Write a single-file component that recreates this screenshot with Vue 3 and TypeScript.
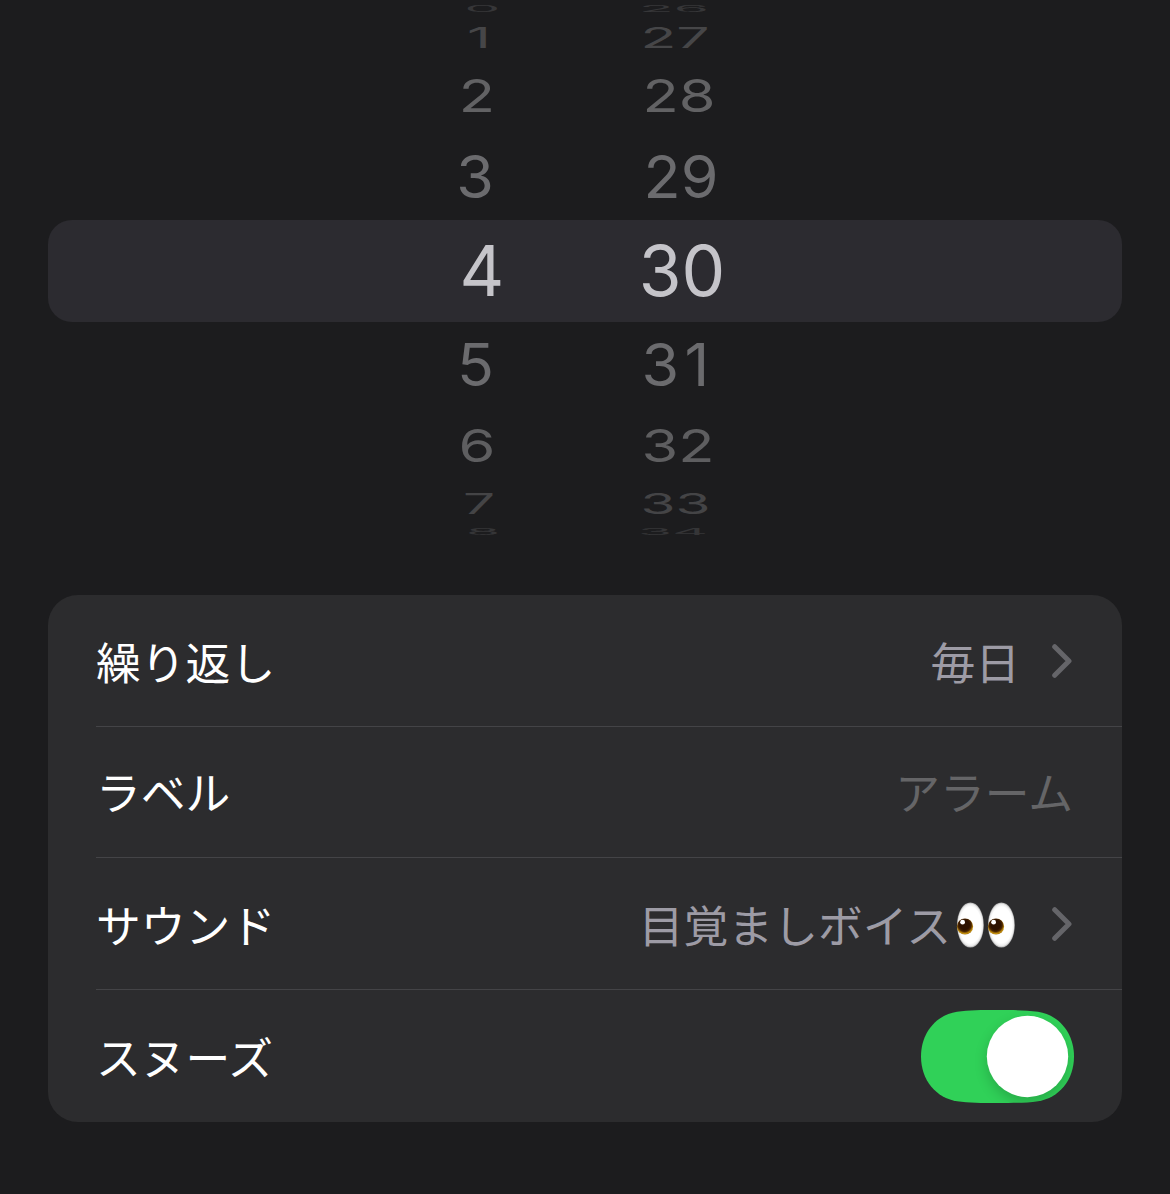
<script lang="ts" setup>
interface WheelRow {
  hour: number
  minute: number
  height: number
  scaleX: number
  scaleY: number
  hourShift: number
  minuteShift: number
  color: string
  loose?: boolean
}

interface Setting {
  label: string
  value?: string
  kind: 'link' | 'placeholder' | 'toggle'
  eyes?: boolean
}

// Rows get flatter and darker the further they are from the selected one
const wheel: WheelRow[] = [
  { hour: 0, minute: 26, height: 16, scaleX: 0.81, scaleY: 0.13, hourShift: 2.5, minuteShift: -6, color: '#363638' },
  { hour: 1, minute: 27, height: 41, scaleX: 0.84, scaleY: 0.41, hourShift: -1, minuteShift: -5, color: '#464648' },
  { hour: 2, minute: 28, height: 75, scaleX: 0.85, scaleY: 0.65, hourShift: -3, minuteShift: -1, color: '#626264' },
  { hour: 3, minute: 29, height: 87, scaleX: 0.87, scaleY: 0.84, hourShift: -5, minuteShift: 1, color: '#6b6b6e' },
  { hour: 4, minute: 30, height: 102, scaleX: 0.99, scaleY: 1, hourShift: 2, minuteShift: 2, color: '#c5c4c9' },
  { hour: 5, minute: 31, height: 86, scaleX: 0.87, scaleY: 0.84, hourShift: -4.5, minuteShift: -2, color: '#6b6b6e', loose: true },
  { hour: 6, minute: 32, height: 75, scaleX: 0.85, scaleY: 0.65, hourShift: -3, minuteShift: -2, color: '#5e5e60' },
  { hour: 7, minute: 33, height: 41, scaleX: 0.81, scaleY: 0.41, hourShift: -1, minuteShift: -4.5, color: '#444446' },
  { hour: 8, minute: 34, height: 16, scaleX: 0.79, scaleY: 0.13, hourShift: 3, minuteShift: -7, color: '#353537' }
]

const settings: Setting[] = [
  { label: '繰り返し', value: '毎日', kind: 'link' },
  { label: 'ラベル', value: 'アラーム', kind: 'placeholder' },
  { label: 'サウンド', value: '目覚ましボイス', kind: 'link', eyes: true },
  { label: 'スヌーズ', kind: 'toggle' }
]

const digitTransform = (row: WheelRow, shift: number) =>
  `translateX(${shift}px) scale(${row.scaleX}, ${row.scaleY})`
</script>

<template>
  <main class="alarm">
    <section class="wheel">
      <div
        v-for="row in wheel"
        :key="row.hour"
        :class="['wheel-row', { selected: row.hour === 4 }]"
        :style="{ height: `${row.height}px`, color: row.color }"
      >
        <span class="digits" :style="{ transform: digitTransform(row, row.hourShift) }">{{ row.hour }}</span>
        <span
          :class="['digits', { loose: row.loose }]"
          :style="{ transform: digitTransform(row, row.minuteShift) }"
        >{{ row.minute }}</span>
      </div>
    </section>

    <section class="card">
      <div v-for="item in settings" :key="item.label" :class="['setting', item.kind]">
        <span class="label">{{ item.label }}</span>
        <span v-if="item.value" class="value">{{ item.value }}</span>
        <svg v-if="item.eyes" class="eyes" viewBox="0 0 60 46" role="img" aria-label="👀">
          <defs>
            <radialGradient id="eye-white" cx="50%" cy="50%" r="50%">
              <stop offset="80%" stop-color="#fff" />
              <stop offset="92%" stop-color="#ececec" />
              <stop offset="100%" stop-color="#a8a8a8" />
            </radialGradient>
            <radialGradient id="eye-iris" cx="48%" cy="40%" r="62%">
              <stop offset="48%" stop-color="#2e1200" />
              <stop offset="66%" stop-color="#4b2500" />
              <stop offset="86%" stop-color="#c7920d" />
              <stop offset="100%" stop-color="#8b5c0b" />
            </radialGradient>
          </defs>
          <g v-for="x in [0, 31]" :key="x" :transform="`translate(${x} 0)`">
            <ellipse cx="14.4" cy="23" rx="13.4" ry="22.6" fill="url(#eye-white)" />
            <circle cx="9" cy="24.5" r="8.1" fill="url(#eye-iris)" />
            <circle cx="6.6" cy="20.2" r="2.4" fill="#fff" />
          </g>
        </svg>
        <svg v-if="item.kind === 'link'" class="chevron" viewBox="0 0 20 34">
          <path d="M2.7 2.7 17 17 2.7 31.3" />
        </svg>
        <svg v-if="item.kind === 'toggle'" class="switch" viewBox="0 0 153 93">
          <defs>
            <clipPath id="track-clip">
              <path d="M0 46.5C0 23 15 5 36 1.8 48 0 60 0 76.5 0S105 0 117 1.8C138 5 153 23 153 46.5S138 88 117 91.2C105 93 93 93 76.5 93S48 93 36 91.2C15 88 0 70 0 46.5Z" />
            </clipPath>
            <filter id="knob-shadow" x="-40%" y="-40%" width="180%" height="180%">
              <feGaussianBlur stdDeviation="7" />
            </filter>
          </defs>
          <g clip-path="url(#track-clip)">
            <rect width="153" height="93" fill="#30d158" />
            <circle cx="106.5" cy="52" r="40" fill="#000" opacity="0.2" filter="url(#knob-shadow)" />
          </g>
          <circle cx="106.5" cy="46.5" r="40.7" fill="#fff" />
        </svg>
      </div>
    </section>
  </main>
</template>

<style>
body {
  margin: 0;
  background: #1c1c1e;
}
</style>

<style scoped>
.alarm {
  box-sizing: border-box;
  width: 1170px;
  height: 1194px;
  padding: 1px 48px 0;
  overflow: hidden;
  background: #1c1c1e;
  font-family: Inter, 'Noto Sans CJK JP', sans-serif;
}

.wheel-row {
  display: grid;
  grid-template-columns: 200px 200px;
  align-items: center;
  padding-left: 332px;
}

.wheel-row.selected {
  border-radius: 24px;
  background: #2c2b30;
}

.digits {
  height: 70px;
  margin: -40px 0;
  font-size: 70px;
  line-height: 70px;
  text-align: center;
}

.digits.loose {
  letter-spacing: 6px;
}

.card {
  display: grid;
  grid-template-rows: 131px 131px 132px 133px;
  margin-top: 55px;
  border-radius: 30px;
  background: #2c2c2e;
}

.setting {
  display: flex;
  align-items: center;
  margin-left: 48px;
  padding-right: 50px;
  font-family: 'Noto Sans CJK JP', sans-serif;
  font-size: 44.8px;
  line-height: 64px;
}

.setting + .setting {
  border-top: 1px solid #444447;
}

.label {
  margin-right: auto;
  color: #fff;
}

.value {
  color: #9d9ba5;
}

.placeholder .label,
.placeholder .value {
  padding-bottom: 2px;
}

.placeholder .value {
  margin-right: -1px;
  color: #656567;
}

.eyes {
  width: 60px;
  height: 46px;
  margin: 3px 0 0 5px;
}

.chevron {
  width: 20px;
  height: 34px;
  margin: 1px 0 0 32px;
}

.eyes + .chevron {
  margin-left: 36px;
}

.chevron path {
  fill: none;
  stroke: #656569;
  stroke-width: 5;
  stroke-linecap: round;
  stroke-linejoin: round;
}

.switch {
  width: 153px;
  height: 93px;
  margin-right: -2px;
}
</style>
